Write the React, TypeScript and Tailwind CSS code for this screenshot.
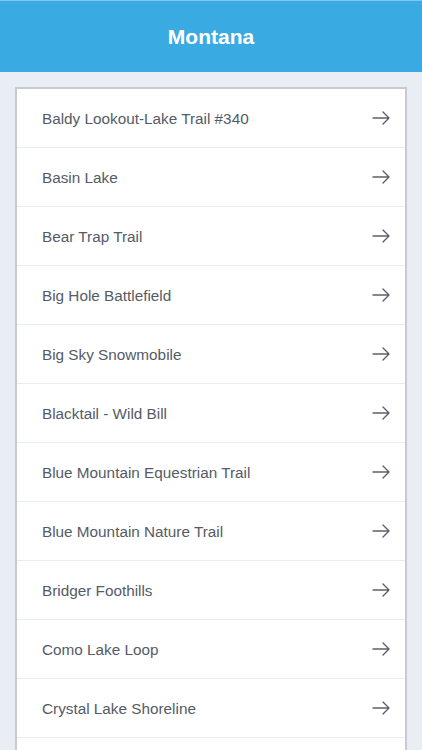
import React from "react";

const items = [
  "Baldy Lookout-Lake Trail #340",
  "Basin Lake",
  "Bear Trap Trail",
  "Big Hole Battlefield",
  "Big Sky Snowmobile",
  "Blacktail - Wild Bill",
  "Blue Mountain Equestrian Trail",
  "Blue Mountain Nature Trail",
  "Bridger Foothills",
  "Como Lake Loop",
  "Crystal Lake Shoreline",
];

function Arrow() {
  return (
    <svg width="18" height="14" viewBox="0 0 18 14" fill="none" stroke="#5b606a" strokeWidth="1.4" strokeLinecap="round" strokeLinejoin="round">
      <path d="M1 7H17M11 1L17 7L11 13" />
    </svg>
  );
}

export default function App() {
  return (
    <div className="w-[422px] h-[750px] overflow-hidden bg-[#e9eef5]" style={{ fontFamily: '"Liberation Sans", Arial, sans-serif' }}>
      <div className="h-[72px] bg-[#3aabe2] border-t border-[#7cc8ef] flex items-center justify-center">
        <h1 className="text-white font-bold text-[21px]">Montana</h1>
      </div>
      <div className="pt-[15px] px-[15px]">
        <div className="bg-white border-2 border-[#c7cbd1] border-b-0">
          {items.map((t) => (
            <div key={t} className="h-[59px] border-b border-[#e9ecf0] flex items-center justify-between pl-[25px] pr-[15px]">
              <span className="text-[15.3px] text-[#555b66] pt-[2px]">{t}</span>
              <Arrow />
            </div>
          ))}
          <div className="h-[59px]" />
        </div>
      </div>
    </div>
  );
}
